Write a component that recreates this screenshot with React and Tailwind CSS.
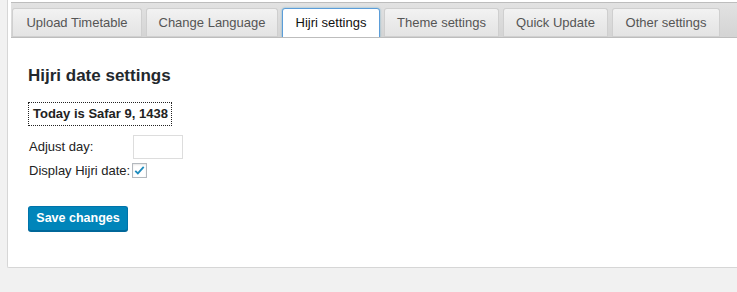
import { useState } from "react";

const tabs = [
  { label: "Upload Timetable", w: "w-[130px]" },
  { label: "Change Language", w: "w-[132px]" },
  { label: "Hijri settings", w: "w-[98px]" },
  { label: "Theme settings", w: "w-[115px]" },
  { label: "Quick Update", w: "w-[105px]" },
  { label: "Other settings", w: "w-[108px]" },
];

export default function App() {
  const [active, setActive] = useState("Hijri settings");
  const [showHijri, setShowHijri] = useState(true);

  return (
    <div
      className="min-h-[292px] bg-[#f1f1f1] pl-[7px] text-[#23282d]"
      style={{ fontFamily: '"Liberation Sans", Arial, sans-serif' }}
    >
      <div className="h-[268px] border border-t-0 border-r-0 border-[#d6d6d6] bg-white rounded-bl-[2px] pl-[3px] flex flex-col">
        {/* tab bar */}
        <div className="mt-[2px] h-[36px] border-t border-b border-[#bdbdbd] bg-gradient-to-b from-[#e2e2e2] to-[#d4d4d4] flex items-end pl-[1px] gap-[4px] overflow-hidden">
          {tabs.map(({ label, w }) => {
            const on = label === active;
            return (
              <button
                key={label}
                onClick={() => setActive(label)}
                className={
                  on
                    ? `${w} shrink-0 whitespace-nowrap h-[30px] -mb-px bg-white border border-[#5b9dd9] rounded-t-[3px] text-[13px] text-[#111] shadow-[0_0_2px_rgba(30,140,190,0.6)]`
                    : `${w} shrink-0 whitespace-nowrap h-[29px] bg-gradient-to-b from-[#f2f2f2] to-[#e3e3e3] border border-b-0 border-[#cfcfcf] rounded-t-[3px] text-[13px] text-[#555] shadow-[inset_0_-1px_0_#d0d0d0]`
                }
              >
                {label}
              </button>
            );
          })}
        </div>

        {/* content */}
        <div className="pl-[17px] pt-[28px]">
          <h2 className="text-[17px] font-bold leading-[20px] text-[#23282d]">
            Hijri date settings
          </h2>

          <div className="mt-[16px] w-[144px] whitespace-nowrap border border-dotted border-[#222] pl-[4px] h-[24px] leading-[22px] text-[13px] font-bold text-[#222]">
            Today is Safar 9, 1438
          </div>

          <div className="mt-[9px] flex flex-col gap-[2px] text-[13px] text-[#222]">
            <div className="flex items-center">
              <span className="w-[105px] pl-px">Adjust day:</span>
              <input
                type="text"
                className="w-[50px] h-[24px] border border-[#ddd] bg-white outline-none"
              />
            </div>
            <div className="flex items-center">
              <span className="pl-px pr-[2px]">Display Hijri date:</span>
              <button
                onClick={() => setShowHijri(!showHijri)}
                className="w-[15px] h-[15px] border border-[#b4b9be] bg-white flex items-center justify-center shadow-[inset_0_1px_2px_rgba(0,0,0,0.1)]"
              >
                {showHijri && (
                  <svg width="13" height="13" viewBox="0 0 20 20">
                    <path
                      d="M3.5 10.5l4 4 9-10"
                      fill="none"
                      stroke="#1e8cbe"
                      strokeWidth="2.8"
                    />
                  </svg>
                )}
              </button>
            </div>
          </div>

          <button className="mt-[25px] w-[100px] h-[25px] bg-[#0085ba] border border-[#0073aa] border-b-[#006799] rounded-[3px] text-white text-[12.5px] font-bold shadow-[0_1px_0_#006799]">
            Save changes
          </button>
        </div>
      </div>
    </div>
  );
}
